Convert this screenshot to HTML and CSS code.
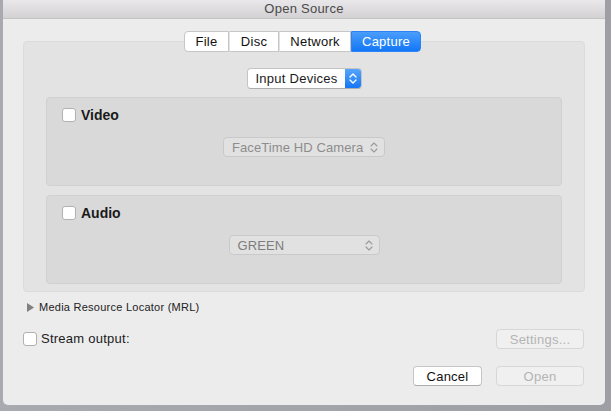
FILE: index.html
```html
<!DOCTYPE html>
<html>
<head>
<meta charset="utf-8">
<title>Open Source</title>
<link rel="stylesheet" href="styles.css">
</head>
<body>
<div class="window">
  <div class="titlebar">Open Source</div>
  <div class="content">
    <div class="tabs">
      <div class="seg seg-file">File</div>
      <div class="seg seg-disc">Disc</div>
      <div class="seg seg-network">Network</div>
      <div class="seg seg-capture selected">Capture</div>
    </div>
    <div class="group">
      <div class="popup-row">
        <div class="popup popup-active">
          <span class="popup-label">Input Devices</span>
          <span class="popup-arrows">
            <svg width="8" height="11" viewBox="0 0 8 11"><path d="M1 4 L4 1 L7 4 M1 7 L4 10 L7 7" fill="none" stroke="#fff" stroke-width="1.4" stroke-linecap="round" stroke-linejoin="round"/></svg>
          </span>
        </div>
      </div>
      <div class="panel">
        <label class="check check-bold"><span class="cb"></span>Video</label>
        <div class="popup popup-disabled popup-cam">
          <span class="popup-label">FaceTime HD Camera</span>
          <svg class="chev" width="8" height="11" viewBox="0 0 8 11"><path d="M1 4 L4 1 L7 4 M1 7 L4 10 L7 7" fill="none" stroke="#9a9a9a" stroke-width="1.1" stroke-linecap="round" stroke-linejoin="round"/></svg>
        </div>
      </div>
      <div class="panel">
        <label class="check check-bold"><span class="cb"></span>Audio</label>
        <div class="popup popup-disabled popup-audio">
          <span class="popup-label label-dark">GREEN</span>
          <svg class="chev" width="8" height="11" viewBox="0 0 8 11"><path d="M1 4 L4 1 L7 4 M1 7 L4 10 L7 7" fill="none" stroke="#9a9a9a" stroke-width="1.1" stroke-linecap="round" stroke-linejoin="round"/></svg>
        </div>
      </div>
    </div>
    <div class="mrl">
      <svg class="tri" width="7" height="9" viewBox="0 0 7 9"><path d="M0 0 L7 4.5 L0 9 Z" fill="#808080"/></svg>
      <span>Media Resource Locator (MRL)</span>
    </div>
    <div class="stream-row">
      <label class="check"><span class="cb"></span>Stream output:</label>
      <div class="btn btn-disabled">Settings...</div>
    </div>
    <div class="footer">
      <div class="btn btn-normal">Cancel</div>
      <div class="btn btn-disabled">Open</div>
    </div>
  </div>
</div>
</body>
</html>
```
FILE: styles.css
```css
* { box-sizing: border-box; }
html, body { margin: 0; height: 100%; }
body {
  background: linear-gradient(90deg, #a8aaaf, #9d9fa4);
  font-family: "Liberation Sans", Arial, sans-serif;
  font-size: 13px;
  letter-spacing: 0.25px;
  color: #1b1b1b;
  overflow: hidden;
}
.window {
  margin-left: 3px;
  width: 602px;
  height: 405px;
  background: #ececec;
  border-radius: 0 0 5px 5px;
  display: flex;
  flex-direction: column;
}
.titlebar {
  height: 19px;
  line-height: 18px;
  text-align: center;
  color: #4a4a4a;
  background: linear-gradient(#e9e7e9, #d3d1d3);
  border-bottom: 1px solid #c3c3c3;
}
.content {
  padding: 0 20px;
  display: flex;
  flex-direction: column;
}
.tabs {
  display: flex;
  justify-content: center;
  margin-top: 12px;
  padding-right: 3px;
  position: relative;
  z-index: 1;
}
.seg {
  height: 21px;
  line-height: 19px;
  text-align: center;
  background: #fff;
  border: 1px solid #c6c6c6;
  border-left: 1px solid #e2e2e2;
  color: #111;
}
.seg-file { width: 45px; border-left-color: #c6c6c6; border-radius: 4px 0 0 4px; }
.seg-disc { width: 50px; }
.seg-network { width: 72px; }
.seg-capture { width: 70px; }
.seg.selected {
  background: linear-gradient(#4a9dfc, #1377f6);
  border-color: #2b83f5;
  color: #fff;
  border-radius: 0 4px 4px 0;
}
.group {
  margin-top: -11px;
  height: 251px;
  background: #e3e3e3;
  border: 1px solid #dbdbdb;
  border-radius: 4px;
  padding: 26px 22px 7px;
  display: flex;
  flex-direction: column;
}
.popup-row {
  display: flex;
  justify-content: center;
  margin-bottom: 8px;
}
.popup {
  display: flex;
  align-items: center;
  border-radius: 4px;
}
.popup-active {
  width: 115px;
  height: 21px;
  background: #fff;
  border: 1px solid #c4c4c4;
  border-bottom-color: #adadad;
  overflow: hidden;
}
.popup-label { flex: 1; padding-left: 8px; white-space: nowrap; }
.popup-arrows {
  width: 16px;
  height: 100%;
  background: linear-gradient(#56a5fc, #1677f5);
  display: flex;
  align-items: center;
  justify-content: center;
}
.panel {
  height: 89px;
  background: #d9d9d9;
  border: 1px solid #d0d0d0;
  border-radius: 4px;
  padding: 10px 15px 0;
  display: flex;
  flex-direction: column;
}
.panel + .panel { margin-top: 9px; }
.check {
  display: flex;
  align-items: center;
  height: 14px;
  line-height: 14px;
}
.check-bold { font-weight: bold; font-size: 14px; letter-spacing: 0; color: #1a1a1a; }
.cb {
  width: 14px;
  height: 14px;
  background: #fff;
  border: 1px solid #b1b1b1;
  border-radius: 3px;
  margin-right: 5px;
  flex: none;
}
.popup-disabled {
  align-self: center;
  margin-top: 15px;
  height: 20px;
  line-height: 19px;
  background: #e1e1e1;
  border: 1px solid #c9c9c9;
  color: #8d8d8d;
  padding-right: 6px;
  letter-spacing: 0.1px;
}
.popup-cam { width: 162px; }
.popup-audio { width: 151px; }
.label-dark { color: #7c7c7c; }
.chev { flex: none; }
.mrl {
  margin-top: 8px;
  height: 14px;
  display: flex;
  align-items: center;
  font-size: 11px;
  color: #222;
}
.tri { margin-left: 4px; margin-right: 5px; }
.stream-row {
  margin-top: 15px;
  height: 20px;
  display: flex;
  align-items: center;
  justify-content: space-between;
  padding-right: 1px;
}
.stream-row .check { line-height: 16px; }
.stream-row .cb { margin-right: 4px; }
.footer {
  margin-top: 17px;
  height: 20px;
  display: flex;
  justify-content: flex-end;
  gap: 14px;
  padding-right: 1px;
}
.btn {
  height: 20px;
  line-height: 19px;
  border-radius: 4px;
  text-align: center;
}
.btn-normal {
  width: 69px;
  background: #fff;
  border: 1px solid #c6c6c6;
  border-bottom-color: #acacac;
  color: #111;
}
.btn-disabled {
  width: 88px;
  background: #f0f0f0;
  border: 1px solid #d7d7d7;
  color: #b4b4b4;
}
```
